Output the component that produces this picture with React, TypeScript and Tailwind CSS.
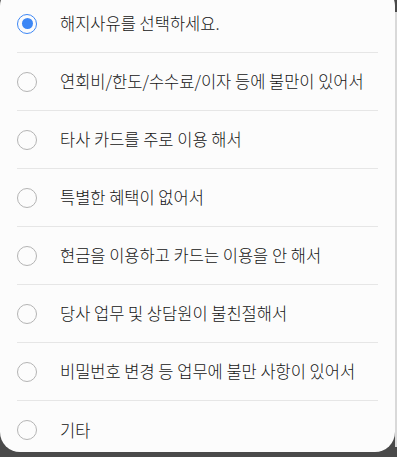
const reasons = [
  "해지사유를 선택하세요.",
  "연회비/한도/수수료/이자 등에 불만이 있어서",
  "타사 카드를 주로 이용 해서",
  "특별한 혜택이 없어서",
  "현금을 이용하고 카드는 이용을 안 해서",
  "당사 업무 및 상담원이 불친절해서",
  "비밀번호 변경 등 업무에 불만 사항이 있어서",
  "기타",
]

function Radio({ checked }: { checked: boolean }) {
  if (checked) {
    return (
      <span className="flex h-[20px] w-[20px] shrink-0 items-center justify-center rounded-full border-[1.5px] border-[#3d87f5]">
        <span className="h-[11px] w-[11px] rounded-full bg-[#3d87f5]" />
      </span>
    )
  }
  return (
    <span className="h-[20px] w-[20px] shrink-0 rounded-full border-[1.5px] border-[#b4b4b4]" />
  )
}

export default function App() {
  return (
    <div
      className="flex h-[457px] w-[397px] overflow-hidden bg-[#4a4a4a]"
      style={{ fontFamily: '"Noto Sans CJK KR", "Noto Sans", sans-serif' }}
    >
      <div className="-mt-[14px] h-[466px] w-[395px] shrink-0 overflow-hidden rounded-[20px] bg-[#fcfcfc] pt-[9px]">
        <ul className="mx-[17px]">
          {reasons.map((text, i) => (
            <li
              key={text}
              className={
                i < reasons.length - 1
                  ? "flex h-[58px] items-center gap-[23px] border-b border-[#e6e6e6]"
                  : "flex h-[58px] items-center gap-[23px]"
              }
            >
              <Radio checked={i === 0} />
              <span className="text-[16.5px] font-light text-[#141414]">
                {text}
              </span>
            </li>
          ))}
        </ul>
      </div>
      <div className="mt-[12px] mb-[10px] w-[2px] bg-[#d9d9d9]" />
    </div>
  )
}
